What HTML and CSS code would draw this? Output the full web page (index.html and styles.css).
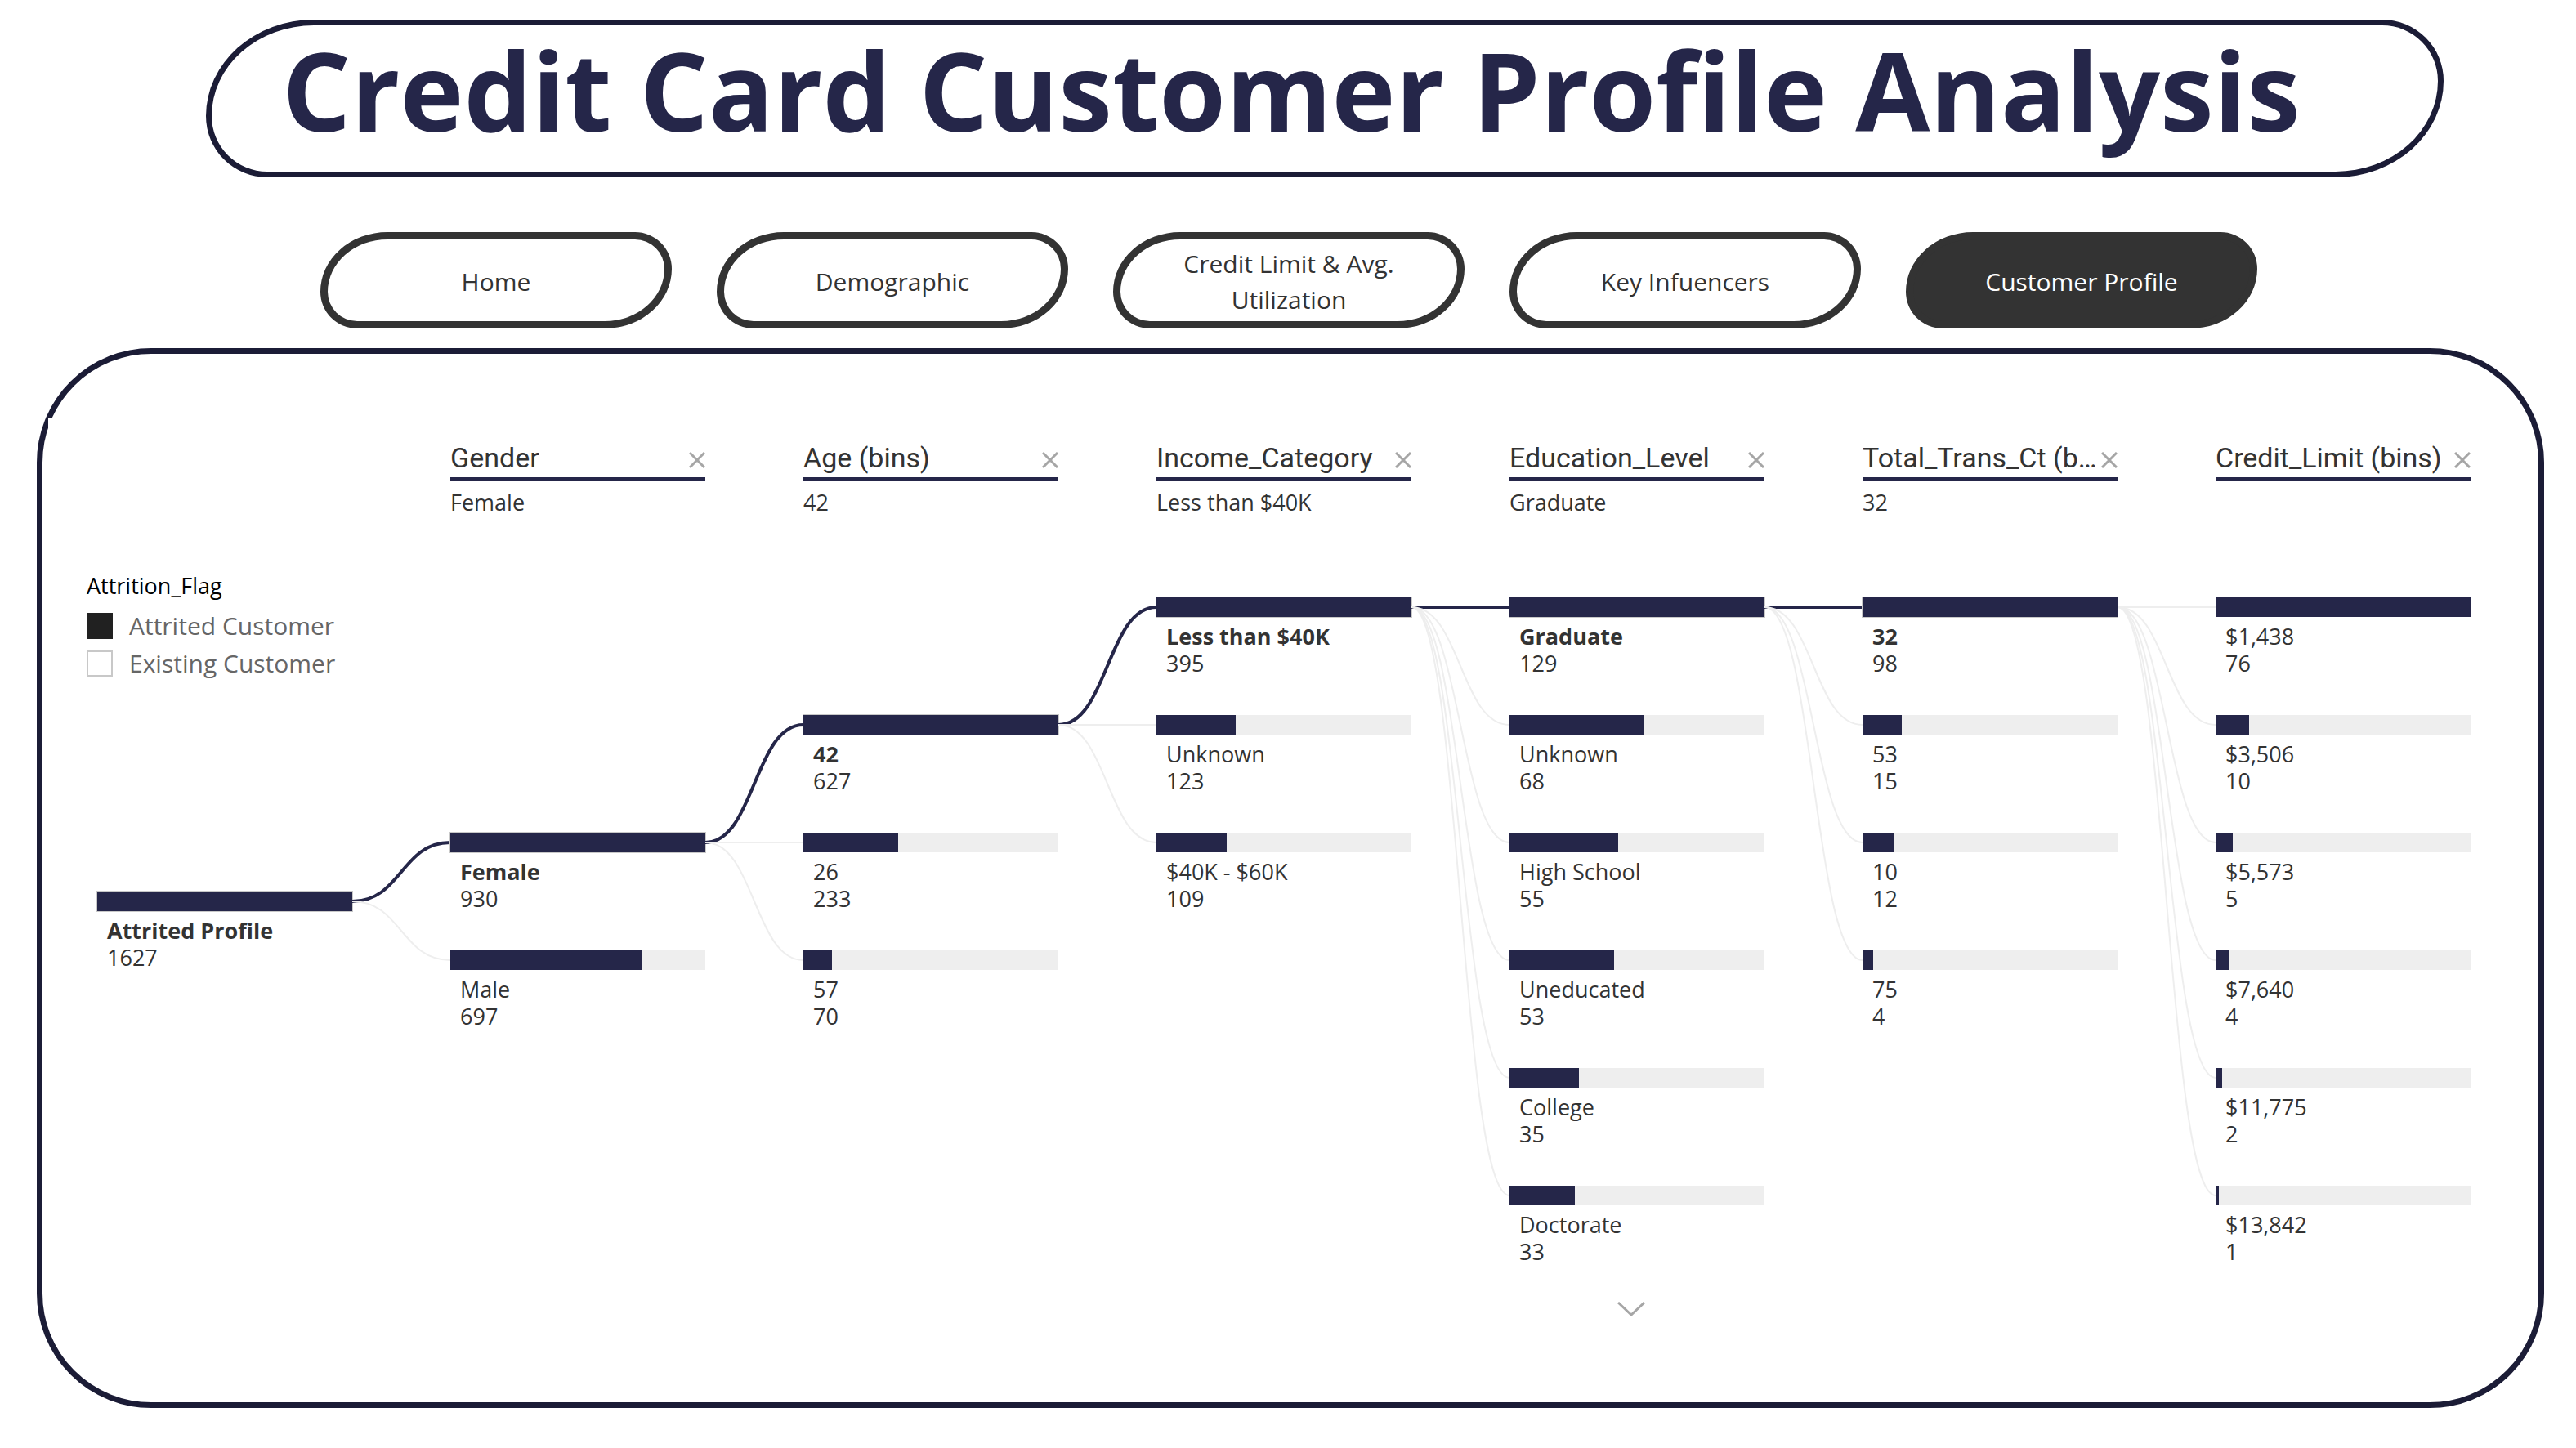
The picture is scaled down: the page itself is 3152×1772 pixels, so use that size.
FILE: index.html
```html
<!DOCTYPE html>
<html lang="en">
<head>
<meta charset="utf-8">
<title>Credit Card Customer Profile Analysis</title>
<link rel="stylesheet" href="styles.css">
</head>
<body>
<svg class="sprite" aria-hidden="true">
  <symbol id="icon-close" viewBox="0 0 20 20"><path d="M1 1 19 19M19 1 1 19"/></symbol>
</svg>

<header class="banner"><h1>Credit Card Customer Profile Analysis</h1></header>

<nav class="pages">
  <a class="page" href="#home">Home</a>
  <a class="page" href="#demographic">Demographic</a>
  <a class="page" href="#credit-limit">Credit Limit &amp; Avg. Utilization</a>
  <a class="page" href="#influencers">Key Infuencers</a>
  <a class="page page-current" href="#profile" aria-current="page">Customer Profile</a>
</nav>

<main class="panel">
  <div class="tree">
    <div class="start">
      <section class="legend">
        <h2>Attrition_Flag</h2>
        <ul>
          <li><span class="swatch swatch-filled"></span>Attrited Customer</li>
          <li><span class="swatch"></span>Existing Customer</li>
        </ul>
      </section>
      <div class="node node-open root">
        <div class="bar"><div class="fill" style="width:100%"></div></div>
        <b>Attrited Profile</b><span>1627</span>
      </div>
    </div>

    <svg class="links" viewBox="0 0 120 864" preserveAspectRatio="none" aria-hidden="true">
      <path class="active" d="M0 372C60 372 60 300 120 300"/>
      <path d="M0 372C60 372 60 444 120 444"/>
    </svg>

    <section class="level level-third">
      <header><div class="field"><h2>Gender</h2><button type="button" aria-label="Remove Gender"><svg><use href="#icon-close"/></svg></button></div><p>Female</p></header>
      <ul class="nodes">
        <li class="node node-open"><div class="bar"><div class="fill" style="width:100%"></div></div><b>Female</b><span>930</span></li>
        <li class="node"><div class="bar"><div class="fill" style="width:74.9%"></div></div><span>Male</span><span>697</span></li>
      </ul>
    </section>

    <svg class="links" viewBox="0 0 120 864" preserveAspectRatio="none" aria-hidden="true">
      <path class="active" d="M0 300C60 300 60 156 120 156"/>
      <path d="M0 300H120"/>
      <path d="M0 300C60 300 60 444 120 444"/>
    </svg>

    <section class="level level-second">
      <header><div class="field"><h2>Age (bins)</h2><button type="button" aria-label="Remove Age (bins)"><svg><use href="#icon-close"/></svg></button></div><p>42</p></header>
      <ul class="nodes">
        <li class="node node-open"><div class="bar"><div class="fill" style="width:100%"></div></div><b>42</b><span>627</span></li>
        <li class="node"><div class="bar"><div class="fill" style="width:37.2%"></div></div><span>26</span><span>233</span></li>
        <li class="node"><div class="bar"><div class="fill" style="width:11.2%"></div></div><span>57</span><span>70</span></li>
      </ul>
    </section>

    <svg class="links" viewBox="0 0 120 864" preserveAspectRatio="none" aria-hidden="true">
      <path class="active" d="M0 156C60 156 60 12 120 12"/>
      <path d="M0 156H120"/>
      <path d="M0 156C60 156 60 300 120 300"/>
    </svg>

    <section class="level">
      <header><div class="field"><h2>Income_Category</h2><button type="button" aria-label="Remove Income_Category"><svg><use href="#icon-close"/></svg></button></div><p>Less than $40K</p></header>
      <ul class="nodes">
        <li class="node node-open"><div class="bar"><div class="fill" style="width:100%"></div></div><b>Less than $40K</b><span>395</span></li>
        <li class="node"><div class="bar"><div class="fill" style="width:31.1%"></div></div><span>Unknown</span><span>123</span></li>
        <li class="node"><div class="bar"><div class="fill" style="width:27.6%"></div></div><span>$40K - $60K</span><span>109</span></li>
      </ul>
    </section>

    <svg class="links" viewBox="0 0 120 864" preserveAspectRatio="none" aria-hidden="true">
      <path class="active" d="M0 12H120"/>
      <path d="M0 12C60 12 60 156 120 156"/>
      <path d="M0 12C60 12 60 300 120 300"/>
      <path d="M0 12C60 12 60 444 120 444"/>
      <path d="M0 12C60 12 60 588 120 588"/>
      <path d="M0 12C60 12 60 732 120 732"/>
    </svg>

    <section class="level">
      <header><div class="field"><h2>Education_Level</h2><button type="button" aria-label="Remove Education_Level"><svg><use href="#icon-close"/></svg></button></div><p>Graduate</p></header>
      <ul class="nodes">
        <li class="node node-open"><div class="bar"><div class="fill" style="width:100%"></div></div><b>Graduate</b><span>129</span></li>
        <li class="node"><div class="bar"><div class="fill" style="width:52.7%"></div></div><span>Unknown</span><span>68</span></li>
        <li class="node"><div class="bar"><div class="fill" style="width:42.6%"></div></div><span>High School</span><span>55</span></li>
        <li class="node"><div class="bar"><div class="fill" style="width:41.1%"></div></div><span>Uneducated</span><span>53</span></li>
        <li class="node"><div class="bar"><div class="fill" style="width:27.1%"></div></div><span>College</span><span>35</span></li>
        <li class="node"><div class="bar"><div class="fill" style="width:25.6%"></div></div><span>Doctorate</span><span>33</span></li>
      </ul>
      <button class="more" type="button" aria-label="Show more"><svg viewBox="0 0 34 18"><path d="M1 1 17 16 33 1"/></svg></button>
    </section>

    <svg class="links" viewBox="0 0 120 864" preserveAspectRatio="none" aria-hidden="true">
      <path class="active" d="M0 12H120"/>
      <path d="M0 12C60 12 60 156 120 156"/>
      <path d="M0 12C60 12 60 300 120 300"/>
      <path d="M0 12C60 12 60 444 120 444"/>
    </svg>

    <section class="level">
      <header><div class="field"><h2>Total_Trans_Ct (b…</h2><button type="button" aria-label="Remove Total_Trans_Ct"><svg><use href="#icon-close"/></svg></button></div><p>32</p></header>
      <ul class="nodes">
        <li class="node node-open"><div class="bar"><div class="fill" style="width:100%"></div></div><b>32</b><span>98</span></li>
        <li class="node"><div class="bar"><div class="fill" style="width:15.3%"></div></div><span>53</span><span>15</span></li>
        <li class="node"><div class="bar"><div class="fill" style="width:12.2%"></div></div><span>10</span><span>12</span></li>
        <li class="node"><div class="bar"><div class="fill" style="width:4.1%"></div></div><span>75</span><span>4</span></li>
      </ul>
    </section>

    <svg class="links" viewBox="0 0 120 864" preserveAspectRatio="none" aria-hidden="true">
      <path d="M0 12H120"/>
      <path d="M0 12C60 12 60 156 120 156"/>
      <path d="M0 12C60 12 60 300 120 300"/>
      <path d="M0 12C60 12 60 444 120 444"/>
      <path d="M0 12C60 12 60 588 120 588"/>
      <path d="M0 12C60 12 60 732 120 732"/>
    </svg>

    <section class="level">
      <header><div class="field"><h2>Credit_Limit (bins)</h2><button type="button" aria-label="Remove Credit_Limit (bins)"><svg><use href="#icon-close"/></svg></button></div></header>
      <ul class="nodes">
        <li class="node"><div class="bar"><div class="fill" style="width:100%"></div></div><span>$1,438</span><span>76</span></li>
        <li class="node"><div class="bar"><div class="fill" style="width:13.2%"></div></div><span>$3,506</span><span>10</span></li>
        <li class="node"><div class="bar"><div class="fill" style="width:6.6%"></div></div><span>$5,573</span><span>5</span></li>
        <li class="node"><div class="bar"><div class="fill" style="width:5.3%"></div></div><span>$7,640</span><span>4</span></li>
        <li class="node"><div class="bar"><div class="fill" style="width:2.6%"></div></div><span>$11,775</span><span>2</span></li>
        <li class="node"><div class="bar"><div class="fill" style="width:1.3%"></div></div><span>$13,842</span><span>1</span></li>
      </ul>
    </section>
  </div>
</main>
</body>
</html>
```
FILE: styles.css
```css
:root {
  --navy: #252649;
  --frame: #1b1c36;
  --ink: #333;
  --track: #eee;
  --row: 144px;
  --head: 193px;
}
* { box-sizing: border-box; }
body {
  margin: 0;
  padding: 24px 0;
  background: #fff;
  color: var(--ink);
  font: 27px/33px "Open Sans", "Noto Sans", sans-serif;
}
h1, h2, p, ul { margin: 0; padding: 0; }
ul { list-style: none; }
button { padding: 0; border: 0; background: none; cursor: pointer; }
.sprite { display: none; }

.banner {
  margin: 0 162px 0 252px;
  padding: 0 82px 21px 0;
  border: 7px solid var(--frame);
  border-radius: 132px 75px 132px 75px / 118px 75px 118px 75px;
}
h1 {
  color: var(--navy);
  font-size: 132px;
  line-height: 158px;
  text-align: center;
}

.pages {
  display: flex;
  justify-content: center;
  gap: 55px;
  margin-top: 67px;
  padding-left: 2px;
}
.page {
  display: flex;
  flex: 0 1 430px;
  align-items: center;
  justify-content: center;
  min-height: 118px;
  padding: 4px 60px 0;
  border: 9px solid var(--ink);
  border-radius: 82px 45px 82px 45px / 73px 45px 73px 45px;
  color: var(--ink);
  font-size: 30px;
  line-height: 44px;
  text-align: center;
  text-decoration: none;
}
.page-current { padding: 4px 20px 0; background: var(--ink); color: #fff; }

.panel {
  margin: 24px 39px 0 45px;
  padding: 79px 19px 96px 7px;
  border: 7px solid var(--frame);
  border-radius: 140px;
}
.tree {
  display: grid;
  grid-template-columns: 325fr repeat(6, 120fr 312fr);
  padding: 26px 64px 9px 47px;
  background: #fff;
}

.start {
  display: flex;
  flex-direction: column;
  padding-top: 161px;
}
.legend h2 {
  margin-bottom: 8px;
  color: #000;
  font-size: 27px;
  font-weight: 400;
  line-height: 36px;
}
.legend li {
  display: flex;
  align-items: center;
  gap: 20px;
  color: #666;
  font-size: 30px;
  line-height: 46px;
}
.swatch { width: 32px; height: 32px; border: 2px solid #c8c8c8; }
.swatch-filled { border-color: #212121; background: #212121; }
.root { margin: 256px 0 0 13px; }

.level { min-width: 0; }
.level header { height: var(--head); }
.field {
  display: flex;
  align-items: center;
  justify-content: space-between;
  gap: 2px;
  padding-bottom: 2px;
  border-bottom: 5px solid var(--navy);
}
.field h2 {
  font: 400 34px/44px Roboto, sans-serif;
  white-space: nowrap;
}
.field button { flex: none; width: 20px; height: 20px; margin-top: 6px; }
.field svg { display: block; width: 20px; height: 20px; }
.field svg, .more svg { fill: none; stroke: #a6a6a6; stroke-width: 3; }
.level p { margin-top: 8px; line-height: 36px; }

.nodes { display: grid; gap: 47px; }
.level-second .nodes { margin-top: var(--row); }
.level-third .nodes { margin-top: calc(var(--row) * 2); }
.node b, .node span { display: block; padding-left: 12px; }
.bar { height: 24px; margin-bottom: 7px; background: var(--track); }
.node-open .bar { outline: 1px solid #c8c8c8; }
.fill { height: 100%; background: var(--navy); }

.links {
  width: 100%;
  height: 864px;
  margin-top: var(--head);
  fill: none;
  stroke: var(--track);
  stroke-width: 2;
}
.links path { vector-effect: non-scaling-stroke; }
.links .active { stroke: var(--navy); stroke-width: 4; }

.more { display: block; margin: 45px auto 0; padding-right: 15px; }
.more svg { display: block; width: 34px; height: 18px; }
```
